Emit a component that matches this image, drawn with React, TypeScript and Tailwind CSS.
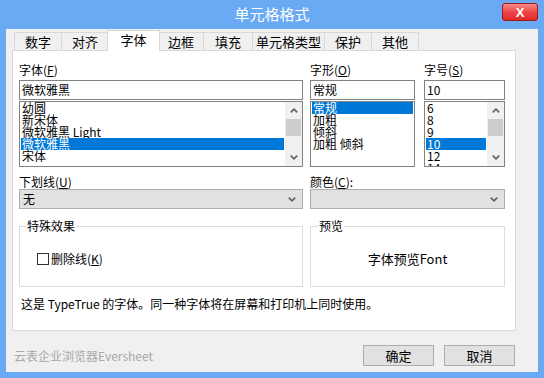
import React from "react";

function Chevron({ dir }: { dir: "up" | "down" }) {
  return (
    <svg width="8" height="5" viewBox="0 0 8 5">
      <path
        d={dir === "up" ? "M0.8 4.4L4 1.2L7.2 4.4" : "M0.8 0.6L4 3.8L7.2 0.6"}
        fill="none"
        stroke="#606060"
        strokeWidth="1.6"
      />
    </svg>
  );
}

function Scrollbar() {
  return (
    <div className="w-[17px] h-full bg-[#f0f0f0] flex flex-col items-center">
      <div className="h-[17px] w-full flex items-center justify-center">
        <Chevron dir="up" />
      </div>
      <div className="w-[15px] h-[17px] bg-[#cdcdcd]" />
      <div className="flex-1" />
      <div className="h-[17px] w-full flex items-center justify-center">
        <Chevron dir="down" />
      </div>
    </div>
  );
}

function ListBox({
  items,
  selected,
  scroll,
  width,
}: {
  items: string[];
  selected: number;
  scroll?: boolean;
  width: string;
}) {
  return (
    <div className={`${width} h-[66px] border border-[#828282] bg-white flex overflow-hidden`}>
      <div className="flex-1 px-[1px] flex flex-col overflow-hidden">
        {items.map((it, i) => (
          <div
            key={i}
            className={`h-[12px] shrink-0 leading-[12px] text-[12px] pl-[1px] whitespace-nowrap ${
              i === selected ? "bg-[#0078d7] text-white" : "text-black"
            }`}
          >
            {it}
          </div>
        ))}
      </div>
      {scroll && <Scrollbar />}
    </div>
  );
}

function Input({ value, width }: { value: string; width: string }) {
  return (
    <div className={`${width} h-[20px] mt-[4px] border border-[#828282] bg-white pl-[2px] flex items-center text-[12px] leading-[12px]`}>
      {value}
    </div>
  );
}

function Label({ children }: { children: React.ReactNode }) {
  return <div className="h-[12px] text-[12px] leading-[12px] whitespace-nowrap">{children}</div>;
}

function Select({ value, width }: { value: string; width: string }) {
  return (
    <div className={`${width} h-[20px] mt-[1px] border border-[#adadad] bg-[#e1e1e1] flex items-center pl-[3px] pr-[6px] text-[12px] leading-[12px]`}>
      <span className="flex-1">{value}</span>
      <Chevron dir="down" />
    </div>
  );
}

function Tab({ label, width, active }: { label: string; width: string; active?: boolean }) {
  return active ? (
    <div className={`${width} h-[21px] -ml-[2px] -mr-[1px] relative z-10 bg-white border-l border-t border-r border-[#d9d9d9] flex items-center justify-center text-[13px] pb-[2px]`}>
      {label}
    </div>
  ) : (
    <div className={`${width} h-[18px] mb-[1px] -ml-px bg-[#f0f0f0] border-l border-t border-r border-[#d9d9d9] flex items-center justify-center text-[13px]`}>
      {label}
    </div>
  );
}

export default function App() {
  return (
    <div className="w-[544px] h-[378px] bg-[#6aa9f4] flex flex-col px-[6px] pb-[6px] text-black font-['Noto_Sans_CJK_SC','Noto_Sans',sans-serif] overflow-hidden">
      {/* title bar */}
      <div className="h-[29px] shrink-0 grid grid-cols-[1fr_auto_1fr]">
        <div />
        <div className="text-white text-[15px] leading-[15px] pt-[6px]">单元格格式</div>
        <div className="justify-self-end pt-[3px]">
          <div className="w-[36px] h-[18px] rounded-[3px] border border-[#9e1b1b] bg-gradient-to-b from-[#f58a8a] via-[#ec4545] to-[#e02a2a] flex items-center justify-center text-white font-bold text-[13px] leading-[13px] font-['Liberation_Sans',sans-serif]">
            X
          </div>
        </div>
      </div>

      {/* window body */}
      <div className="flex-1 bg-[#f0f0f0] flex flex-col pl-[6px] pt-[1px]">
        {/* tabs */}
        <div className="h-[21px] -mb-[1px] flex items-end pl-[3px] relative z-10">
          <Tab label="数字" width="w-[48px]" />
          <Tab label="对齐" width="w-[48px]" />
          <Tab label="字体" width="w-[53px]" active />
          <Tab label="边框" width="w-[46px]" />
          <Tab label="填充" width="w-[50px]" />
          <Tab label="单元格类型" width="w-[73px]" />
          <Tab label="保护" width="w-[48px]" />
          <Tab label="其他" width="w-[48px]" />
        </div>

        {/* panel */}
        <div className="w-[504px] h-[281px] border border-[#d9d9d9] bg-white pl-[6px] pt-[13px] flex flex-col">
          <div className="flex">
            <div className="flex flex-col">
              <Label>
                字体(<u>F</u>)
              </Label>
              <Input value="微软雅黑" width="w-[284px]" />
              <div className="mt-[1px]">
                <ListBox
                  width="w-[284px]"
                  items={["幼圆", "新宋体", "微软雅黑 Light", "微软雅黑", "宋体"]}
                  selected={3}
                  scroll
                />
              </div>
            </div>
            <div className="flex flex-col ml-[7px]">
              <Label>
                字形(<u>O</u>)
              </Label>
              <Input value="常规" width="w-[105px]" />
              <div className="mt-[1px]">
                <ListBox width="w-[105px]" items={["常规", "加粗", "倾斜", "加粗 倾斜"]} selected={0} />
              </div>
            </div>
            <div className="flex flex-col ml-[9px]">
              <Label>
                字号(<u>S</u>)
              </Label>
              <Input value="10" width="w-[81px]" />
              <div className="mt-[1px]">
                <ListBox width="w-[81px]" items={["6", "8", "9", "10", "12", "14"]} selected={3} scroll />
              </div>
            </div>
          </div>

          <div className="flex mt-[9px]">
            <div className="flex flex-col">
              <Label>
                下划线(<u>U</u>)
              </Label>
              <Select value="无" width="w-[284px]" />
            </div>
            <div className="flex flex-col ml-[7px]">
              <Label>
                颜色(<u>C</u>):
              </Label>
              <Select value="" width="w-[195px]" />
            </div>
          </div>

          <div className="flex mt-[11px]">
            <fieldset className="w-[284px] h-[67px] border border-[#dcdcdc]">
              <legend className="ml-[6px] px-[1px] text-[12px] leading-[12px]">特殊效果</legend>
              <div className="flex items-center mt-[21px] ml-[17px] text-[12px] leading-[12px]">
                <div className="w-[12px] h-[12px] border border-[#333333] bg-white" />
                <span className="ml-[2px]">
                  删除线(<u>K</u>)
                </span>
              </div>
            </fieldset>
            <fieldset className="w-[195px] h-[67px] ml-[7px] border border-[#dcdcdc]">
              <legend className="ml-[7px] px-[1px] text-[12px] leading-[12px]">预览</legend>
              <div className="h-[53px] flex items-center justify-center text-[13px]">字体预览Font</div>
            </fieldset>
          </div>

          <div className="mt-[11px] ml-[2px] text-[12px] leading-[12px] whitespace-nowrap">
            这是 TypeTrue 的字体。同一种字体将在屏幕和打印机上同时使用。
          </div>
        </div>

        {/* footer */}
        <div className="w-[504px] mt-[14px] flex items-center">
          <div className="ml-[2px] flex-1 text-[12px] leading-[12px] text-[#a8a8a8]">云表企业浏览器Eversheet</div>
          <button className="w-[71px] h-[21px] border border-[#adadad] bg-[#e1e1e1] text-[13px] leading-[13px] flex items-center justify-center">
            确定
          </button>
          <button className="w-[71px] h-[21px] ml-[10px] mr-[1px] border border-[#adadad] bg-[#e1e1e1] text-[13px] leading-[13px] flex items-center justify-center">
            取消
          </button>
        </div>
      </div>
    </div>
  );
}
